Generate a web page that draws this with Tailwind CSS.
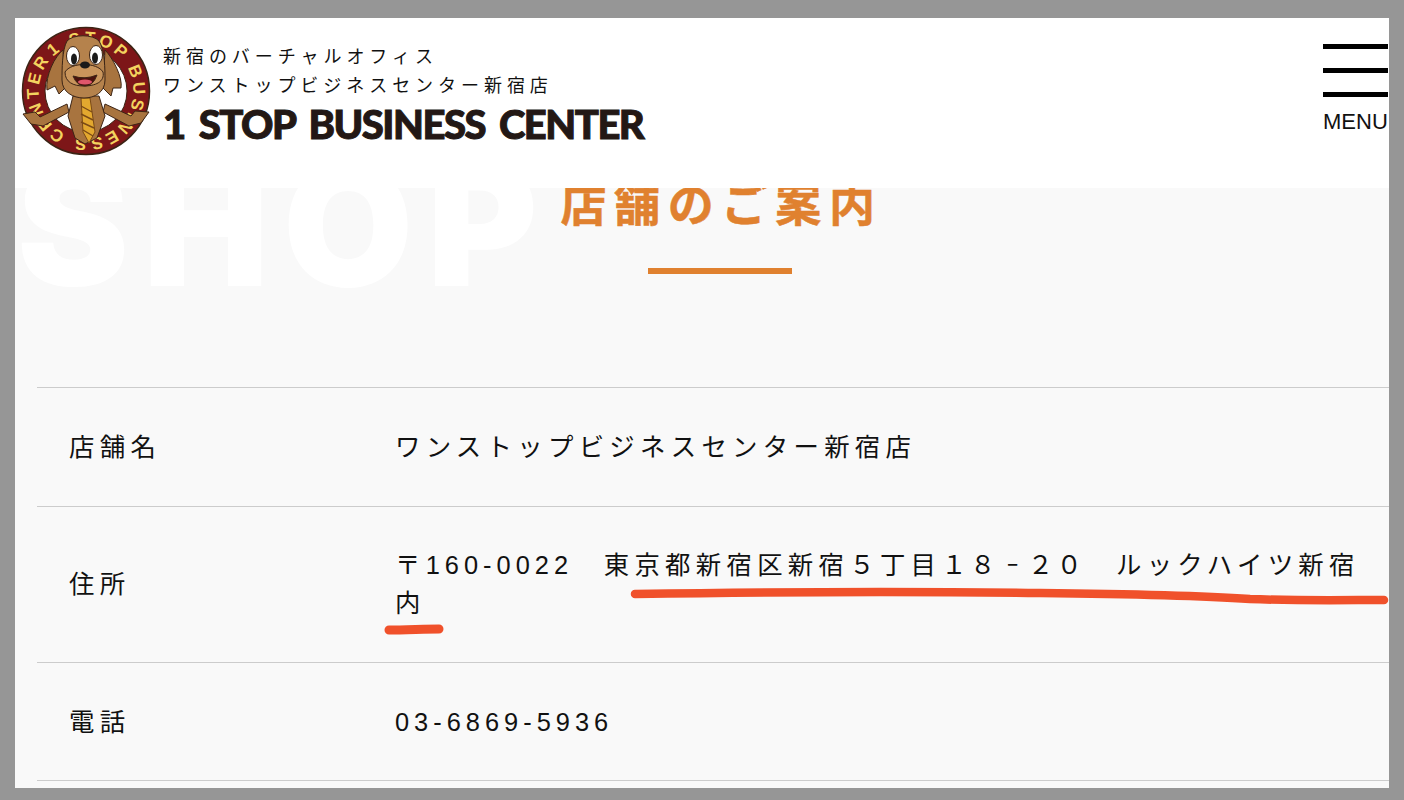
<!DOCTYPE html>
<html lang="ja">
<head>
<meta charset="utf-8">
<script src="https://cdn.jsdelivr.net/npm/@tailwindcss/browser@4"></script>
</head>
<body class="m-0">
<div class="relative w-[1404px] h-[800px] overflow-hidden bg-[#969696] pt-[18px] pl-[15px] pr-[15px] pb-[12px] font-['Liberation_Sans','Noto_Sans_CJK_JP',sans-serif] text-[#111]">
  <div class="relative h-full flex flex-col bg-[#f9f9f9] overflow-hidden">
    <header class="relative z-10 h-[170px] shrink-0 bg-white flex justify-between">
      <div class="flex">
        <svg class="ml-[6px] mt-[8px] w-[130px] h-[130px] shrink-0" viewBox="0 0 130 130">
          <defs><path id="ring" d="M 32 31 A 47.4 47.4 0 1 1 32 99 A 47.4 47.4 0 0 1 32 31"/></defs>
          <circle cx="65" cy="65" r="63.5" fill="#7d1618" stroke="#3c2415" stroke-width="1.5"/>
          <circle cx="65" cy="65" r="41" fill="#fff" stroke="#3c2415" stroke-width="1"/>
          <text font-family="Liberation Sans" font-weight="700" font-size="17" fill="#f3d35f"><textPath href="#ring" textLength="292" lengthAdjust="spacing">1 STOP BUSINESS CENTER</textPath></text>
          <path d="M2 88 L14 86 L19 91 L46 78 L48 86 L22 100 L10 98 Z" fill="#a8743f" stroke="#3c2415"/>
          <path d="M128 86 L114 85 L110 90 L84 78 L82 86 L108 100 L120 97 Z" fill="#a8743f" stroke="#3c2415"/>
          <path d="M52 70 L78 70 L84 90 L76 112 L64 118 L54 112 L47 90 Z" fill="#a8743f" stroke="#3c2415"/>
          <path d="M60 72 L69 72 L74 106 L68 117 L62 106 Z" fill="#e3a82f" stroke="#7a4a16"/>
          <path d="M60 80 L71 86 M60 88 L72 94 M60 96 L73 102 M62 104 L72 110" stroke="#7a4a16" stroke-width="1.4"/>
          <path d="M42 24 C34 30 24 50 26 64 L34 60 L38 68 L44 62 Z" fill="#a8743f" stroke="#3c2415"/>
          <path d="M84 24 C92 32 102 52 100 62 L92 62 L90 70 L82 62 Z" fill="#a8743f" stroke="#3c2415"/>
          <path d="M46 15 C52 8 72 8 78 15 C84 24 84 44 84 54 C84 66 74 72 63 72 C52 72 41 66 41 54 C41 44 41 24 46 15 Z" fill="#b5824c" stroke="#3c2415"/>
          <ellipse cx="52" cy="30" rx="6.5" ry="9.5" fill="#fff" stroke="#3c2415"/>
          <ellipse cx="75" cy="29" rx="6.5" ry="9.5" fill="#fff" stroke="#3c2415"/>
          <ellipse cx="53" cy="33" rx="3" ry="5.5" fill="#1a1a1a"/>
          <ellipse cx="74" cy="32" rx="3" ry="5.5" fill="#1a1a1a"/>
          <path d="M44 46 C50 36 76 36 82 46 C84 56 74 60 63 60 C52 60 44 56 44 46 Z" fill="#c9955c" stroke="#3c2415"/>
          <ellipse cx="64" cy="39" rx="5" ry="3.5" fill="#1a1a1a"/>
          <path d="M52 50 Q64 54 76 49 Q72 60 64 60 Q56 60 52 50 Z" fill="#4b120e" stroke="#3c2415"/>
          <ellipse cx="64" cy="56" rx="7" ry="2.6" fill="#e0566b"/>
        </svg>
        <div class="ml-[12px] pt-[25px] flex flex-col">
          <p class="text-[18px] leading-[29px] tracking-[4.95px] whitespace-nowrap">新宿のバーチャルオフィス</p>
          <p class="text-[18px] leading-[29px] tracking-[4.95px] whitespace-nowrap">ワンストップビジネスセンター新宿店</p>
          <p class="text-[40px] leading-[46px] font-black font-['Lato',sans-serif] text-[#231815] whitespace-nowrap tracking-[-1.5px] [word-spacing:6px] [-webkit-text-stroke:1px_#231815]">1 STOP BUSINESS CENTER</p>
        </div>
      </div>
      <div class="w-[65px] mr-[1px] pt-[26px] flex flex-col">
        <span class="block h-[5px] bg-black"></span>
        <span class="block h-[5px] bg-black mt-[19px]"></span>
        <span class="block h-[5px] bg-black mt-[19px]"></span>
        <span class="block text-[22px] leading-[26px] mt-[12px] whitespace-nowrap">MENU</span>
      </div>
    </header>

    <section class="relative h-[199px] shrink-0">
      <div class="absolute left-[2px] top-[-55px] text-[168px] leading-[184px] font-black font-['Inter',sans-serif] text-white tracking-[14px] whitespace-nowrap">SHOP</div>
      <div class="relative flex flex-col items-center mt-[-11px] pl-[32px] w-full">
        <h1 class="text-[46px] leading-[56px] font-bold text-[#e0812f] tracking-[7.7px] ml-[7px] [-webkit-text-stroke:0.5px_#e0812f]">店舗のご案内</h1>
        <span class="block w-[144px] h-[6px] bg-[#e0812f] mt-[35px] ml-[4px]"></span>
      </div>
    </section>

    <dl class="ml-[22px] text-[25.4px] leading-[38px] tracking-[5.3px]">
      <div class="grid grid-cols-[358px_1fr] border-t border-[#cccccc] py-[39.75px]">
        <dt class="pl-[32px]">店舗名</dt>
        <dd>ワンストップビジネスセンター新宿店</dd>
      </div>
      <div class="grid grid-cols-[358px_1fr] items-center border-t border-[#cccccc] py-[39.75px]">
        <dt class="pl-[32px]">住所</dt>
        <dd class="pr-[20px]">〒<span class="tracking-[5px]">160-0022</span>　東京都新宿区新宿５丁目<span class="tracking-[3.4px]">１８<span class="inline-block scale-x-50">－</span>２０</span>　ルックハイツ新宿内</dd>
      </div>
      <div class="grid grid-cols-[358px_1fr] border-y border-[#cccccc] pt-[39.75px] pb-[39px]">
        <dt class="pl-[32px]">電話</dt>
        <dd class="tracking-[5px]">03-6869-5936</dd>
      </div>
    </dl>
  </div>

  <svg class="absolute left-0 top-0 w-[1404px] h-[800px] pointer-events-none" viewBox="0 0 1404 800" fill="none">
    <path d="M635 594 C760 592 900 591 1040 593 C1130 594 1190 595 1250 599 C1300 601 1350 600 1384 600" stroke="#f0512b" stroke-width="8.5" stroke-linecap="round"/>
    <path d="M389 630 C405 630 425 629 439 629" stroke="#f0512b" stroke-width="9" stroke-linecap="round"/>
  </svg>
</div>
</body>
</html>
